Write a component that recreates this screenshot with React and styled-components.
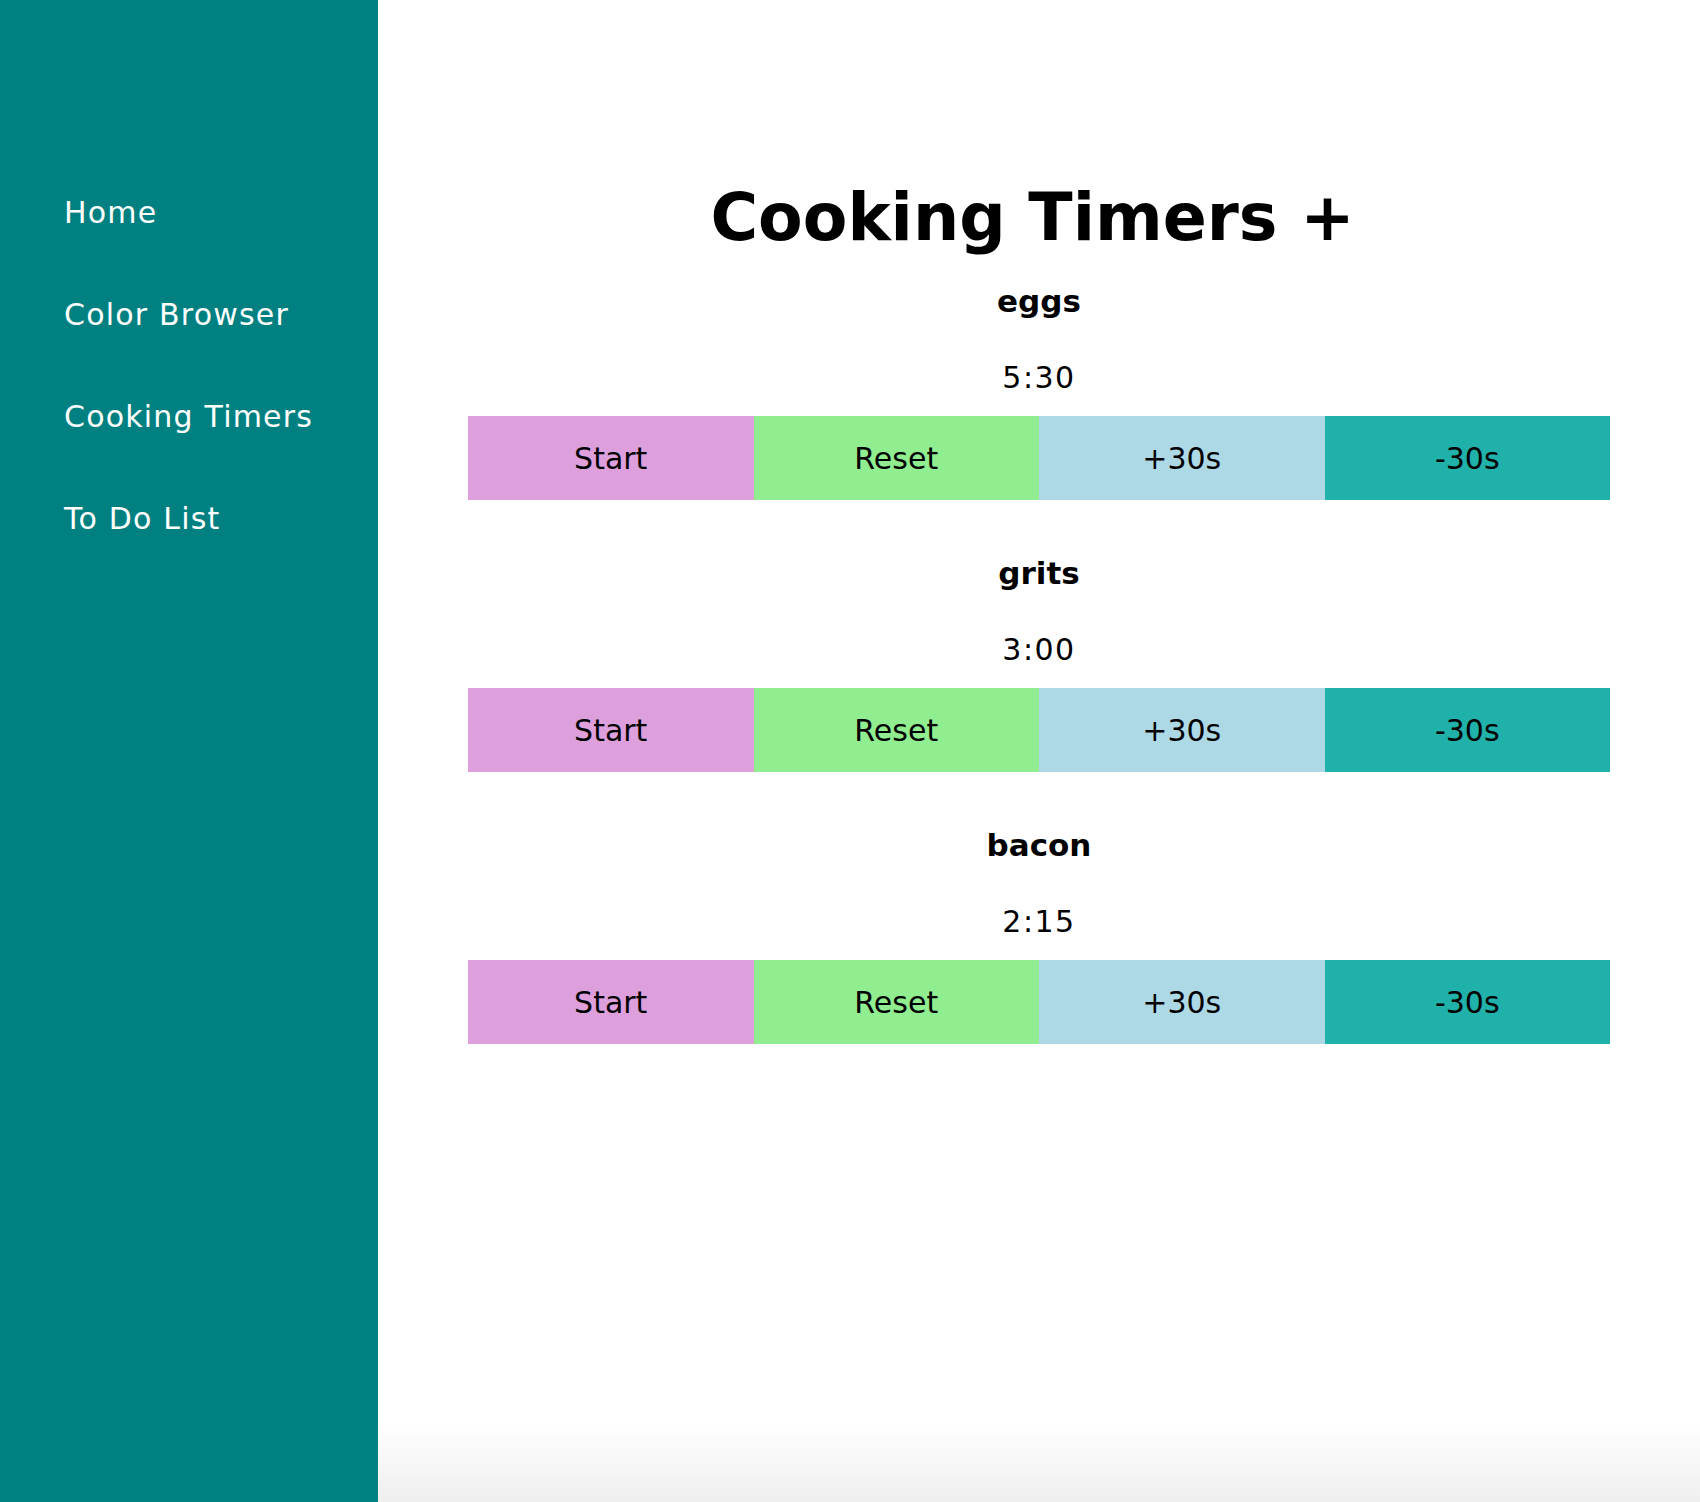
import React, { useState } from 'react'
import styled, { createGlobalStyle } from 'styled-components'

const GlobalStyle = createGlobalStyle`
  html, body {
    margin: 0;
    padding: 0;
  }
  body {
    font-family: Verdana, 'DejaVu Sans', sans-serif;
    color: #000;
  }
`

const Layout = styled.div`
  display: flex;
  min-height: 100vh;
`

const Sidebar = styled.nav`
  flex: 0 0 378px;
  background: #008080;
  display: flex;
  flex-direction: column;
  gap: 66px;
  padding: 195px 0 0 64px;
  box-sizing: border-box;
`

const NavLink = styled.a`
  color: #fff;
  text-decoration: none;
  font-size: 30px;
  line-height: 36px;
  letter-spacing: 1.2px;
  cursor: pointer;
`

const Main = styled.main`
  flex: 1;
  padding: 180px 90px 0;
  text-align: center;
  background: linear-gradient(to bottom, #fff calc(100% - 80px), #efefef 100%);
`

const Title = styled.h1`
  margin: 0;
  padding-right: 13px;
  font-size: 65px;
  line-height: 76px;
  font-weight: 700;
`

const TimerList = styled.div`
  display: flex;
  flex-direction: column;
  gap: 55px;
  margin-top: 27px;
`

const Timer = styled.section`
  display: flex;
  flex-direction: column;
`

const Name = styled.h2`
  margin: 0;
  font-size: 31px;
  line-height: 36px;
  font-weight: 700;
`

const Time = styled.div`
  margin: 41px 0 20px;
  font-size: 30px;
  line-height: 36px;
  letter-spacing: 1.5px;
`

const Controls = styled.div`
  display: grid;
  grid-template-columns: repeat(4, 1fr);
  height: 84px;
`

const Button = styled.button`
  border: none;
  margin: 0;
  padding: 0;
  background: ${props => props.color};
  font-family: Verdana, 'DejaVu Sans', sans-serif;
  font-size: 30px;
  color: #000;
  cursor: pointer;
`

const initial = [
  { name: 'eggs', seconds: 330 },
  { name: 'grits', seconds: 180 },
  { name: 'bacon', seconds: 135 },
]

const format = s => `${Math.floor(s / 60)}:${String(s % 60).padStart(2, '0')}`

export default () => {
  const [timers, setTimers] = useState(initial)

  const adjust = (i, delta) =>
    setTimers(ts => ts.map((t, j) => (j === i ? { ...t, seconds: Math.max(0, t.seconds + delta) } : t)))

  const reset = i =>
    setTimers(ts => ts.map((t, j) => (j === i ? initial[i] : t)))

  return (
    <Layout>
      <GlobalStyle />
      <Sidebar>
        <NavLink>Home</NavLink>
        <NavLink>Color Browser</NavLink>
        <NavLink>Cooking Timers</NavLink>
        <NavLink>To Do List</NavLink>
      </Sidebar>
      <Main>
        <Title>Cooking Timers +</Title>
        <TimerList>
          {timers.map((t, i) => (
            <Timer key={t.name}>
              <Name>{t.name}</Name>
              <Time>{format(t.seconds)}</Time>
              <Controls>
                <Button color="#dda0dd">Start</Button>
                <Button color="#90ee90" onClick={() => reset(i)}>Reset</Button>
                <Button color="#add8e6" onClick={() => adjust(i, 30)}>+30s</Button>
                <Button color="#20b2aa" onClick={() => adjust(i, -30)}>-30s</Button>
              </Controls>
            </Timer>
          ))}
        </TimerList>
      </Main>
    </Layout>
  )
}
